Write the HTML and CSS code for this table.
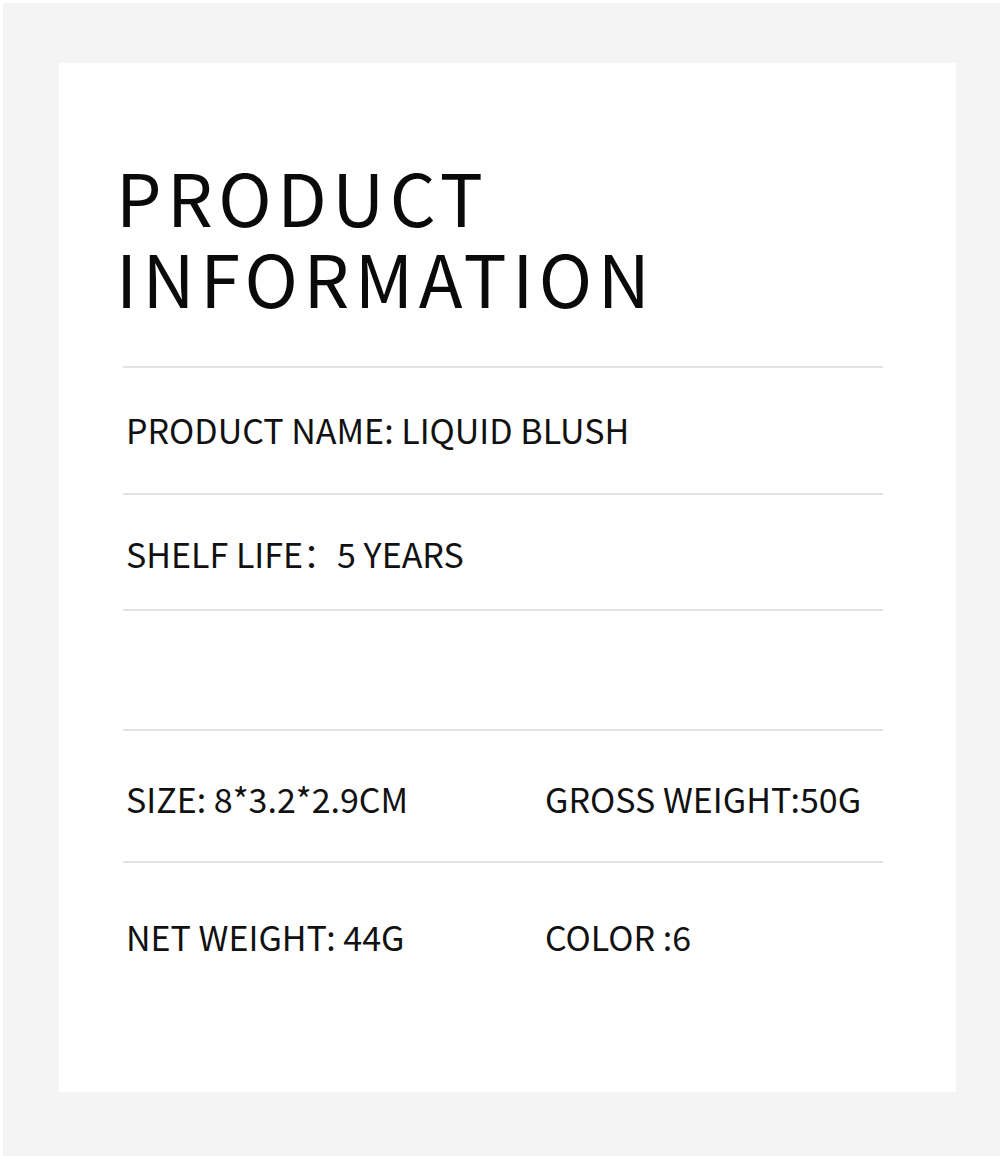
FILE: index.html
```html
<!DOCTYPE html>
<html>
<head>
<meta charset="utf-8">
<link rel="stylesheet" href="styles.css">
</head>
<body>
<div class="page">
  <div class="card">
    <h1 class="title"><span class="title-line">PRODUCT</span><span class="title-line">INFORMATION</span></h1>
    <div class="list">
      <div class="row row-name"><span class="txt">PRODUCT NAME: LIQUID BLUSH</span></div>
      <div class="row row-shelf"><span class="txt">SHELF LIFE：5 YEARS</span></div>
      <div class="row row-empty"></div>
      <div class="row row-size">
        <span class="cell"><span class="txt">SIZE: 8*3.2*2.9CM</span></span>
        <span class="cell"><span class="txt">GROSS WEIGHT:50G</span></span>
      </div>
      <div class="row row-net last">
        <span class="cell"><span class="txt">NET WEIGHT: 44G</span></span>
        <span class="cell"><span class="txt">COLOR :6</span></span>
      </div>
    </div>
  </div>
</div>
</body>
</html>
```

FILE: styles.css
```css
html, body {
  margin: 0;
  padding: 0;
  background: #ffffff;
}
.page {
  margin: 3px 0 0 3px;
  background: #f4f4f4;
  height: 1153px;
  padding: 60px 0 0 56px;
  box-sizing: border-box;
}
.card {
  width: 897px;
  height: 1029px;
  background: #ffffff;
  box-sizing: border-box;
  padding: 0 73px 0 64px;
}
.title {
  margin: 0 0 0 -7px;
  padding-top: 92px;
  height: 303px;
  box-sizing: border-box;
  display: flex;
  flex-direction: column;
  font-family: "Noto Sans CJK SC", "Noto Sans", sans-serif;
  font-weight: 400;
  font-size: 72px;
  line-height: 81px;
  letter-spacing: 5.5px;
  color: #0a0a0a;
}
.title-line {
  display: block;
  height: 81px;
  overflow: visible;
}
.list {
  border-top: 2px solid #e2e2e2;
  width: 760px;
}
.row {
  display: flex;
  align-items: flex-start;
  border-bottom: 2px solid #e2e2e2;
  box-sizing: border-box;
  font-family: "Noto Sans CJK SC", "Noto Sans", sans-serif;
  font-size: 34px;
  line-height: 34px;
  color: #111;
  padding-left: 3px;
}
.row.last { border-bottom: none; }
.row-name { height: 127px; padding-top: 45px; }
.row-shelf { height: 116px; padding-top: 42px; }
.row-empty { height: 120px; }
.row-size { height: 132px; padding-top: 51px; }
.row-net { height: 160px; padding-top: 57px; }
.cell { flex: none; width: 419px; }
.cell + .cell { width: auto; }
.txt { display: inline-block; white-space: nowrap; }
```
